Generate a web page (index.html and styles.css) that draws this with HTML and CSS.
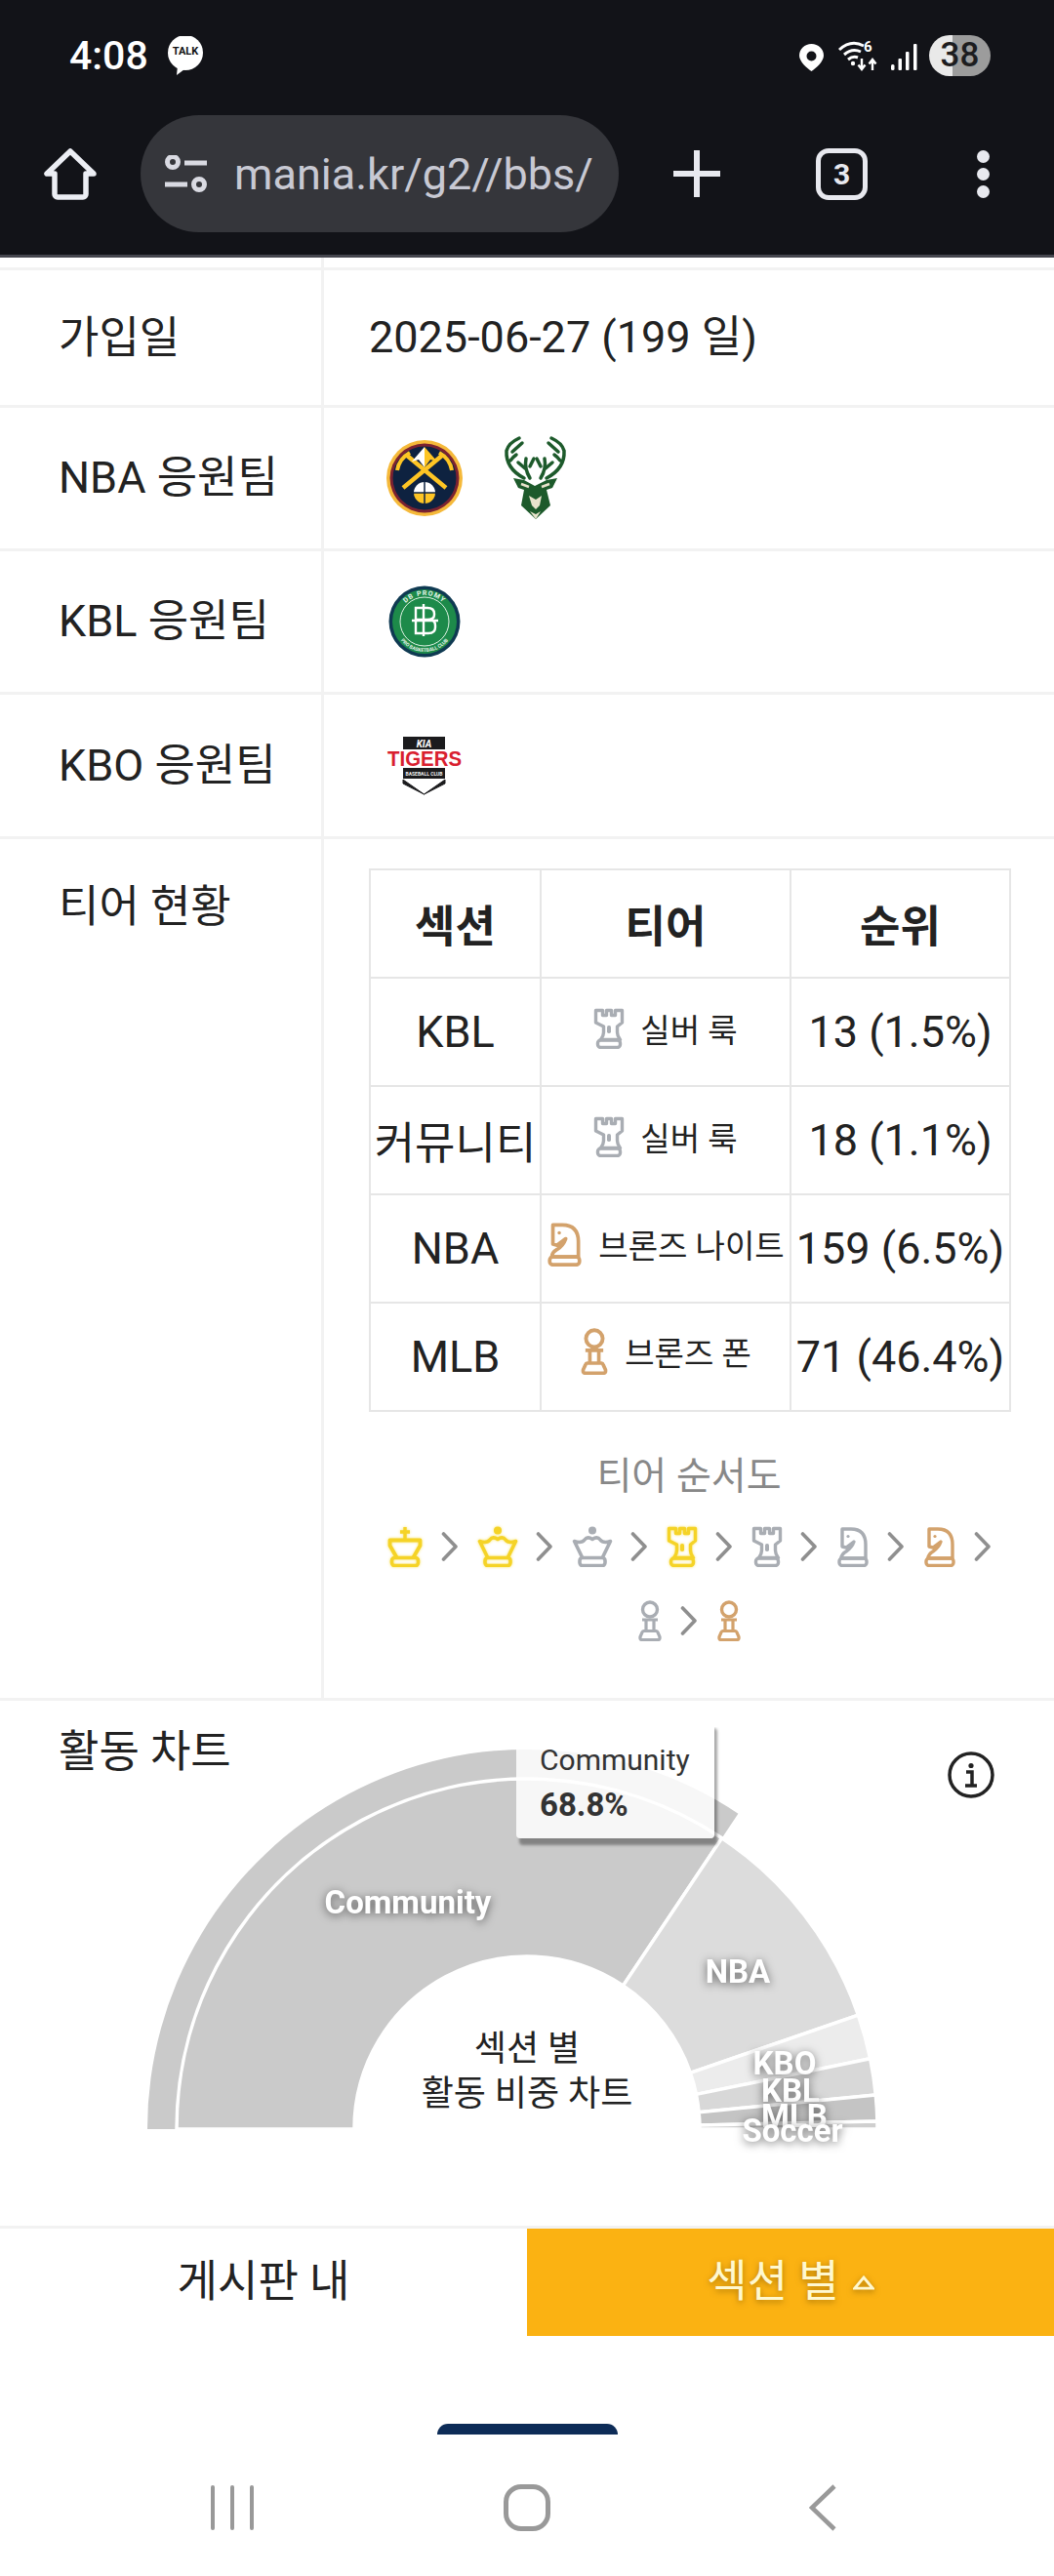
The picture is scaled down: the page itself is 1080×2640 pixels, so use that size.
FILE: index.html
```html
<!DOCTYPE html>
<html lang="ko">
<head>
<meta charset="utf-8">
<title>mania.kr</title>
<link rel="stylesheet" href="styles.css">
</head>
<body>
<svg class="sprite" width="0" height="0" aria-hidden="true">
  <symbol id="king" viewBox="0 0 38 42">
    <path d="M19 1v13M14 6h10" stroke-width="3.4"/>
    <path d="M11 33 3.5 20v-5.5h31V20L27 33" stroke-width="3.8" stroke-linejoin="round"/>
    <rect x="5.5" y="32.5" width="27" height="8" rx="3" stroke-width="3.6"/>
  </symbol>
  <symbol id="queen" viewBox="0 0 42 42">
    <circle cx="21" cy="4.5" r="4" fill="currentColor" stroke="none"/>
    <path d="M11 33 2.5 15.5Q10 18 13 14 16 10 21 13.500 26 10 29 14 32 18 39.500 15.500L31 33" stroke-width="3.600" stroke-linejoin="round"/>
    <rect x="8" y="32.500" width="26" height="8" rx="3" stroke-width="3.600"/>
  </symbol>
  <symbol id="rook" viewBox="0 0 32 42">
    <path d="M2.500 2.500h7v5h4v-5h5v5h4v-5h7V15l-5 4v6q0 4 3 7.500H7.500q3-3.500 3-7.500v-6L2.500 15Z" stroke-width="3.400" stroke-linejoin="round"/>
    <rect x="14" y="18" width="4" height="8" rx="1.800" fill="currentColor" stroke="none"/>
    <rect x="4.500" y="33" width="23" height="7.500" rx="3" stroke-width="3.400"/>
  </symbol>
  <symbol id="knight" viewBox="0 0 34 42">
    <path d="M6 3H15Q30 3 30 19V33H5Q5 29 10 26 16 22 18 16L10 22 6 21Z" stroke-width="3.400" stroke-linejoin="round"/>
    <circle cx="12" cy="10.500" r="1.600" fill="currentColor" stroke="none"/>
    <rect x="3" y="33" width="28" height="7.500" rx="3" stroke-width="3.400"/>
  </symbol>
  <symbol id="pawn" viewBox="0 0 26 42">
    <circle cx="13" cy="9.500" r="7.500" stroke-width="3.400"/>
    <path d="M5 20h16M9 20v11M17 20v11" stroke-width="3.200"/>
    <path d="M6.500 31.500h13q1 0 1.500 1.500l2 4.500q.5 3-2 3H5q-2.500 0-2-3L5 33q.5-1.500 1.500-1.500Z" stroke-width="3.200"/>
  </symbol>
  <symbol id="chev" viewBox="0 0 18 30">
    <path d="M2.500 2 15 15 2.500 28" stroke-width="3.600" stroke-linecap="round" stroke-linejoin="round"/>
  </symbol>
</svg>

<header class="browser">
  <div class="status">
    <div class="status-left">
      <span class="time">4:08</span>
      <span class="talk">
        <svg class="talk-bubble" viewBox="0 0 38 40"><circle cx="19" cy="17" r="18"/><path d="M11 30 10 40 22 31Z"/></svg>
        <span class="talk-text">TALK</span>
      </span>
    </div>
    <div class="status-right">
      <svg class="pin" viewBox="0 0 25 28"><path fill-rule="evenodd" d="M12.500 0C5.500 0 0 5.300 0 12c0 6 8 13 12.500 16C17 25 25 18 25 12 25 5.300 19.500 0 12.500 0Zm0 7.500a5 5 0 1 1 0 10 5 5 0 0 1 0-10Z"/></svg>
      <svg class="wifi" viewBox="0 0 44 32">
        <path d="M1 10Q13-1 26 6M6 15Q14 8 23 12M10 20Q15 16 20 18" class="wifi-arcs"/>
        <circle cx="15" cy="24" r="2.200" class="wifi-dot"/>
        <path d="M24 19v10M20.500 25.500 24 30l3.500-4.500M35 31V21M31.500 24.500 35 20l3.500 4.500" class="wifi-arrow"/>
        <text x="26" y="12" class="wifi-six">6</text>
      </svg>
      <svg class="signal" viewBox="0 0 27 28"><rect x="0" y="21" width="3.500" height="6" rx="1.500"/><rect x="7.500" y="15" width="3.500" height="12" rx="1"/><rect x="15" y="8" width="3.500" height="19" rx="1"/><rect x="23" y="0" width="3.500" height="27" rx="1"/></svg>
      <span class="battery">38</span>
    </div>
  </div>
  <div class="toolbar">
    <svg class="home" viewBox="0 0 54 53"><path d="M27 3 3 26h8v21a3 3 0 0 0 3 3h26a3 3 0 0 0 3-3V26h8Z"/></svg>
    <div class="url">
      <svg class="tune" viewBox="0 0 43 38"><circle cx="8" cy="7" r="5.500"/><path d="M20 8h23M0 30h23"/><circle cx="35" cy="30" r="5.500"/></svg>
      <span class="url-text">mania.kr/g2//bbs/</span>
    </div>
    <svg class="plus" viewBox="0 0 48 48"><path d="M24 1v46M1 24h46"/></svg>
    <span class="tabs">3</span>
    <span class="dots"><i></i><i></i><i></i></span>
  </div>
</header>

<main>
  <div class="gap-top"></div>
  <section class="row row-first"><div class="label">가입일</div><div class="value date">2025-06-27 (199 일)</div></section>

  <section class="row row-tall"><div class="label">NBA 응원팀</div>
    <div class="value logos">
      <svg class="logo nuggets" viewBox="0 0 78 78">
        <circle cx="39" cy="39" r="39" fill="#f5b93a"/>
        <circle cx="39" cy="39" r="35.500" fill="#7b2231"/>
        <circle cx="39" cy="39" r="32.500" fill="#0e2240"/>
        <path d="M20 15 61 49M58 15 17 49" stroke="#fec524" stroke-width="4.500" fill="none"/>
        <path d="M11 31Q13 19 24 13M67 31Q65 19 54 13" stroke="#fec524" stroke-width="4" fill="none"/>
        <path d="M39 7 26 22l7-2 6 8Z" fill="#fff"/>
        <path d="M39 7 52 22l-7-2-6 8Z" fill="#fec524"/>
        <path d="M28 54a11 11 0 0 1 22 0Z" fill="#fff"/>
        <path d="M28 54a11 11 0 0 0 22 0Z" fill="#fec524"/>
        <path d="M28 54h22M39 43v22" stroke="#0e2240" stroke-width="1.500"/>
      </svg>
      <svg class="logo bucks" viewBox="0 0 63 84">
        <g fill="none" stroke="#1d5a2b" stroke-width="3.500" stroke-linecap="round">
          <path d="M20 42Q1 32 2 14 4 6 15 1M8 15 18 6M6 24Q9 20 12 18"/>
          <path d="M43 42Q62 32 61 14 59 6 48 1M55 15 45 6M57 24Q54 20 51 18"/>
          <path d="M26 42Q20 32 22 22M21 32 14 26M26 30 30 22"/>
          <path d="M37 42Q43 32 41 22M42 32 49 26M37 30 33 22"/>
        </g>
        <path d="M9 42 20 44 31 50 43 44 54 42 49 52 43 54 47 70 32 84 17 70 20 54 14 52Z" fill="#1d5a2b"/>
        <path d="M25 60 32 64 38 60 36 70 32 74 28 70Z" fill="#e9e3cc"/>
        <path d="M26 76 32 84 37 76 32 79Z" fill="#e9e3cc"/>
        <path d="M17 48 25 51M46 48 38 51" stroke="#e9e3cc" stroke-width="2.500"/>
      </svg>
    </div>
  </section>

  <section class="row row-tall"><div class="label">KBL 응원팀</div>
    <div class="value logos">
      <svg class="logo promy" viewBox="0 0 78 78">
        <circle cx="39" cy="39" r="36.500" fill="#0f3a52"/>
        <circle cx="39" cy="39" r="33" fill="#1d8a4a"/>
        <circle cx="39" cy="39" r="25" fill="none" stroke="#dff2e4" stroke-width="1"/>
        <path id="promyTop" d="M12 39a27 27 0 0 1 54 0" fill="none"/>
        <path id="promyBot" d="M8 39a31 31 0 0 0 62 0" fill="none"/>
        <text class="promy-t"><textPath href="#promyTop" startOffset="50%" text-anchor="middle">DB PROMY</textPath></text>
        <text class="promy-b"><textPath href="#promyBot" startOffset="50%" text-anchor="middle">PRO BASKETBALL CLUB</textPath></text>
        <g fill="none" stroke="#fff" stroke-width="2.400">
          <path d="M30 25h12q7 0 7 6v1q0 5-7 5H30ZM30 37h14q6 0 6 6v2q0 6-7 6H30Z"/>
          <path d="M26 38h27M38 21v33"/>
        </g>
      </svg>
    </div>
  </section>

  <section class="row row-tall row-kbo"><div class="label">KBO 응원팀</div>
    <div class="value logos">
      <svg class="logo tigers" viewBox="0 0 78 62">
        <path d="M17 1h43v13H17Z" fill="#1b1b1d"/>
        <text x="38.500" y="12" class="kia">KIA</text>
        <text x="1" y="31" class="tigers-text" textLength="76" lengthAdjust="spacingAndGlyphs">TIGERS</text>
        <path d="M17 33h43v11H17Z" fill="#1b1b1d"/>
        <text x="38.500" y="41" class="tigers-sub">BASEBALL CLUB</text>
        <path d="M17 45 38.500 60 60 45V49L38.500 60 17 49Z" fill="#1b1b1d" stroke="#1b1b1d" stroke-width="1"/>
      </svg>
    </div>
  </section>

  <section class="row row-tier"><div class="label label-top">티어 현황</div>
    <div class="value tier">
      <table class="tier-table">
        <colgroup><col class="c1"><col class="c2"><col class="c3"></colgroup>
        <thead><tr><th>섹션</th><th>티어</th><th>순위</th></tr></thead>
        <tbody>
          <tr><td>KBL</td><td><span class="tier-name"><svg class="ico silver t-rook"><use href="#rook"/></svg>실버 룩</span></td><td>13 (1.5%)</td></tr>
          <tr><td>커뮤니티</td><td><span class="tier-name"><svg class="ico silver t-rook"><use href="#rook"/></svg>실버 룩</span></td><td>18 (1.1%)</td></tr>
          <tr><td>NBA</td><td><span class="tier-name"><svg class="ico bronze t-knight"><use href="#knight"/></svg>브론즈 나이트</span></td><td>159 (6.5%)</td></tr>
          <tr><td>MLB</td><td><span class="tier-name"><svg class="ico bronze t-pawn"><use href="#pawn"/></svg>브론즈 폰</span></td><td>71 (46.4%)</td></tr>
        </tbody>
      </table>
      <div class="order-title">티어 순서도</div>
      <div class="order">
        <svg class="ico gold o-king"><use href="#king"/></svg>
        <svg class="ico arrow"><use href="#chev"/></svg>
        <svg class="ico gold o-queen"><use href="#queen"/></svg>
        <svg class="ico arrow"><use href="#chev"/></svg>
        <svg class="ico silver o-queen"><use href="#queen"/></svg>
        <svg class="ico arrow"><use href="#chev"/></svg>
        <svg class="ico gold o-rook"><use href="#rook"/></svg>
        <svg class="ico arrow"><use href="#chev"/></svg>
        <svg class="ico silver o-rook"><use href="#rook"/></svg>
        <svg class="ico arrow"><use href="#chev"/></svg>
        <svg class="ico silver o-knight"><use href="#knight"/></svg>
        <svg class="ico arrow"><use href="#chev"/></svg>
        <svg class="ico bronze o-knight"><use href="#knight"/></svg>
        <svg class="ico arrow"><use href="#chev"/></svg>
        <svg class="ico silver o-pawn"><use href="#pawn"/></svg>
        <svg class="ico arrow"><use href="#chev"/></svg>
        <svg class="ico bronze o-pawn"><use href="#pawn"/></svg>
      </div>
    </div>
  </section>

  <section class="chart">
    <div class="chart-head">
      <span class="chart-title">활동 차트</span>
      <svg class="info" viewBox="0 0 48 48"><circle cx="24" cy="24" r="22"/><circle class="info-dot" cx="24" cy="14.500" r="2.600"/><path d="M19 21h6v13M18 35h12"/></svg>
    </div>
    <div class="chart-canvas">
      <svg class="pie" viewBox="0 0 1080 511" width="1080" height="511">
        <path class="ring" d="M151 412A389 389 0 0 1 756.400 88.700L739.700 113.700A359 359 0 0 0 181 412Z"/>
        <path class="slice s-com" d="M181 412A359 359 0 0 1 739.700 113.700L638.500 264.900A177 177 0 0 0 363 412Z"/>
        <path class="slice s-nba" d="M739.700 113.700A359 359 0 0 1 879.400 295.100L707.400 354.400A177 177 0 0 0 638.500 264.900Z"/>
        <path class="slice s-kbo" d="M879.400 295.100A359 359 0 0 1 891.700 339.800L713.400 376.400A177 177 0 0 0 707.400 354.400Z"/>
        <path class="slice s-kbl" d="M891.700 339.800A359 359 0 0 1 897.300 377L716.100 394.700A177 177 0 0 0 713.400 376.400Z"/>
        <path class="slice s-mlb" d="M897.300 377A359 359 0 0 1 898.900 403.900L717 408A177 177 0 0 0 716.100 394.700Z"/>
        <path class="slice s-soc" d="M898.900 403.900A359 359 0 0 1 899 412H717A177 177 0 0 0 717 408Z"/>
        <text class="pie-label" x="418" y="191">Community</text>
        <text class="pie-label" x="756" y="262">NBA</text>
        <text class="pie-label" x="804" y="356">KBO</text>
        <text class="pie-label" x="810" y="384">KBL</text>
        <text class="pie-label" x="814" y="410">MLB</text>
        <text class="pie-label" x="812" y="425">Soccer</text>
        <text class="pie-center" x="540" y="342">섹션 별</text>
        <text class="pie-center" x="540" y="388">활동 비중 차트</text>
      </svg>
      <div class="tooltip">
        <div class="tip-name">Community</div>
        <div class="tip-value">68.8%</div>
      </div>
    </div>
  </section>

  <section class="switch">
    <div class="switch-item">게시판 내</div>
    <div class="switch-item active">섹션 별 <svg class="caret" viewBox="0 0 24 16"><path d="M12 2 22 14H2Z"/></svg></div>
  </section>
  <div class="peek"></div>
</main>

<footer class="nav">
  <span class="nav-recent"><i></i><i></i><i></i></span>
  <span class="nav-home"></span>
  <svg class="nav-back" viewBox="0 0 28 48"><path d="M26 2 3 24l23 22"/></svg>
</footer>
</body>
</html>
```

FILE: styles.css
```css
* { box-sizing: border-box; }
html, body { margin: 0; padding: 0; }
body {
  width: 1080px;
  height: 2640px;
  overflow: hidden;
  background: #fff;
  color: #222;
  font-family: Roboto, "Noto Sans CJK KR", sans-serif;
}
.sprite { position: absolute; }

/* browser chrome */
.browser {
  height: 264px;
  background: #121318;
  border-bottom: 3px solid #45464e;
  color: #fff;
}
.status {
  height: 118px;
  padding: 36px 65px 0 71px;
  display: flex;
  justify-content: space-between;
}
.status-left, .status-right { display: flex; align-items: center; height: 42px; }
.time { font-size: 41px; font-weight: 500; width: 100px; line-height: 42px; }
.talk { position: relative; width: 38px; height: 40px; display: block; }
.talk-bubble { width: 38px; height: 40px; fill: #fff; display: block; }
.talk-text {
  position: absolute; left: 0; right: 0; top: 9px;
  text-align: center; font-size: 11px; font-weight: 700; color: #111; line-height: 14px;
}
.pin { width: 25px; height: 28px; fill: #fff; margin-top: 4px; margin-right: 15px; }
.wifi { width: 44px; height: 32px; margin-right: 10px; overflow: visible; }
.wifi-arcs { fill: none; stroke: #fff; stroke-width: 3; }
.wifi-dot { fill: #fff; }
.wifi-arrow { fill: none; stroke: #fff; stroke-width: 2.4; }
.wifi-six { fill: #fff; font-size: 15px; font-weight: 700; font-family: Roboto, sans-serif; }
.signal { width: 27px; height: 28px; fill: #fff; margin-right: 12px; margin-top: 4px; }
.battery {
  width: 63px; height: 42px; border-radius: 21px;
  background: linear-gradient(90deg, #e9e9e9 0 38%, #9c9c9c 38% 100%);
  color: #1d1d20; font-size: 35px; font-weight: 500; text-align: center; line-height: 42px;
}
.toolbar { height: 120px; display: flex; align-items: center; padding-left: 45px; }
.home { width: 54px; height: 53px; flex: none; fill: none; stroke: #eceef4; stroke-width: 5.500; stroke-linejoin: round; margin-right: 45px; }
.url {
  width: 490px; height: 120px; flex: none; border-radius: 60px;
  background: #35363b; display: flex; align-items: center; padding-left: 25px; overflow: hidden;
}
.tune { width: 43px; height: 38px; flex: none; margin-right: 28px; fill: none; stroke: #d9dae2; stroke-width: 5; }
.url-text { font-size: 45px; color: #c8c9d3; white-space: nowrap; letter-spacing: 0; }
.plus { width: 48px; height: 48px; flex: none; margin-left: 56px; fill: none; stroke: #e8e9ef; stroke-width: 6; stroke-linecap: round; }
.tabs {
  width: 53px; height: 53px; flex: none; margin-left: 98px; border: 5px solid #e8e9ef; border-radius: 13px;
  font-size: 30px; font-weight: 700; text-align: center; line-height: 43px; color: #e8e9ef;
}
.dots { display: flex; flex-direction: column; gap: 5px; margin-left: 112px; flex: none; }
.dots i { display: block; width: 13px; height: 13px; border-radius: 50%; background: #e8e9ef; }

/* profile rows */
.gap-top { height: 10px; width: 332px; border-right: 3px solid #f2f2f2; }
.row {
  display: grid;
  grid-template-columns: 332px 1fr;
  border-top: 3px solid #f2f2f2;
  height: 141px;
}
.row-tall { height: 147px; }
.row-kbo { height: 148px; }
.row-tier { height: 883px; }
.label {
  border-right: 3px solid #f2f2f2;
  padding-left: 60px;
  padding-bottom: 9px;
  font-size: 45px;
  display: flex;
  align-items: center;
  white-space: nowrap;
}
.row-first .label { padding-bottom: 7px; }
.label-top { align-items: flex-start; padding-top: 37px; padding-bottom: 0; line-height: 66px; }
.value { display: flex; align-items: center; padding-left: 46px; font-size: 45px; }
.date { padding-bottom: 9px; }
.logos { padding-left: 64px; gap: 43px; }
.logo { display: block; flex: none; overflow: visible; }
.nuggets { width: 78px; height: 78px; }
.bucks { width: 63px; height: 84px; }
.promy { width: 78px; height: 78px; }
.tigers { width: 78px; height: 62px; }
.promy-t { font-size: 7px; font-weight: 700; fill: #e6f5ea; letter-spacing: 1px; }
.promy-b { font-size: 5px; font-weight: 700; fill: #e6f5ea; }
.kia { fill: #fff; font-size: 10px; font-weight: 700; font-style: italic; text-anchor: middle; }
.tigers-text { fill: #d9202f; font-size: 22px; font-weight: 700; font-family: "Liberation Sans", sans-serif; }
.tigers-sub { fill: #eee; font-size: 5px; font-weight: 700; text-anchor: middle; }

/* tier panel */
.tier { display: block; padding-top: 30px; padding-right: 45px; }
.tier-table { border-collapse: collapse; table-layout: fixed; width: 656px; }
.c1 { width: 175px; }
.c2 { width: 256px; }
.c3 { width: 225px; }
.tier-table th, .tier-table td {
  border: 2px solid #e6e6e6;
  height: 111px;
  padding: 0;
  text-align: center;
  white-space: nowrap;
  font-size: 45px;
}
.tier-table th { font-weight: 700; }
.tier-name { display: inline-flex; align-items: center; gap: 16px; font-size: 33px; }
.ico { display: block; flex: none; fill: none; stroke: currentColor; overflow: visible; }
.silver { color: #a9adb3; }
.bronze { color: #d3a26c; }
.gold { color: #f5d327; filter: drop-shadow(0 0 1.500px #f9e675); }
.arrow { width: 18px; height: 30px; color: #8f8f8f; }
.t-rook { width: 32px; height: 42px; }
.t-knight { width: 37px; height: 46px; }
.t-pawn { width: 30px; height: 48px; }
.order-title {
  margin-top: 38px; font-size: 39px; line-height: 56px; color: #888; text-align: center; width: 656px;
}
.order {
  margin-top: 23px; width: 656px;
  display: flex; flex-wrap: wrap; justify-content: center; align-items: center;
  column-gap: 18.500px; row-gap: 34px;
}
.o-king { width: 38px; height: 42px; }
.o-queen { width: 42px; height: 42px; }
.o-rook { width: 32px; height: 42px; }
.o-knight { width: 34px; height: 42px; }
.o-pawn { width: 26px; height: 42px; }

/* chart */
.chart {
  display: grid;
  border-top: 3px solid #f2f2f2;
  height: 541px;
}
.chart-head, .chart-canvas { grid-area: 1 / 1; }
.chart-head {
  z-index: 1;
  display: flex; justify-content: space-between; align-items: flex-start;
  padding: 20px 61px 0 60px;
}
.chart-title { font-size: 45px; line-height: 66px; }
.info { width: 48px; height: 48px; margin-top: 32px; fill: none; stroke: #222; stroke-width: 3.500; }
.info-dot { fill: #222; stroke: none; }
.chart-canvas { position: relative; margin-top: 27px; height: 511px; overflow: hidden; }
.pie { display: block; }
.ring { fill: #cacaca; }
.slice { stroke: #fff; stroke-width: 3.500; stroke-linejoin: round; }
.s-com { fill: #cacaca; }
.s-nba { fill: #dcdcdc; }
.s-kbo { fill: #ececec; }
.s-kbl { fill: #d8d8d8; }
.s-mlb { fill: #c4c4c4; }
.s-soc { fill: #cfcfcf; }
.pie-label {
  fill: #fff; font-size: 33px; font-weight: 700; text-anchor: middle;
  filter: drop-shadow(0 2px 5px rgba(0, 0, 0, .55));
}
.pie-center { fill: #222; font-size: 36px; text-anchor: middle; }
.tooltip {
  position: absolute; left: 529px; top: -6px; width: 203px; height: 120px;
  padding: 21px 24px;
  background: rgba(255, 255, 255, .84);
  box-shadow: 3px 7px 3px rgba(0, 0, 0, .35);
  border-radius: 4px;
}
.tip-name { font-size: 30px; line-height: 38px; color: #333; }
.tip-value { font-size: 33px; font-weight: 700; line-height: 38px; margin-top: 8px; color: #333; }

/* switch + bottom */
.switch {
  display: grid; grid-template-columns: 1fr 1fr;
  border-top: 3px solid #f2f2f2;
  height: 113px;
}
.switch-item { display: flex; align-items: center; justify-content: center; font-size: 45px; padding-bottom: 9px; }
.switch-item.active {
  background: #fbb212; color: #fff8cf; gap: 14px;
  text-shadow: 0 2px 6px rgba(120, 80, 0, .6);
}
.caret { width: 22px; height: 15px; fill: none; stroke: #fff8cf; stroke-width: 3; margin-top: 10px; filter: drop-shadow(0 2px 3px rgba(120, 80, 0, .6)); }
.peek {
  width: 185px; height: 11px; margin: 90px auto 0;
  background: #0d2c57; border-radius: 12px 12px 0 0;
}
.nav {
  display: flex; align-items: center; height: 48px; margin-top: 51px;
  padding-left: 216px;
}
.nav-recent { display: flex; gap: 16px; width: 300px; height: 46px; }
.nav-recent i { display: block; width: 4px; height: 46px; background: #999; border-radius: 2px; }
.nav-home { width: 48px; height: 48px; border: 5px solid #999; border-radius: 18px; flex: none; }
.nav-back { width: 28px; height: 48px; margin-left: 265px; fill: none; stroke: #999; stroke-width: 4.500; flex: none; }
```
